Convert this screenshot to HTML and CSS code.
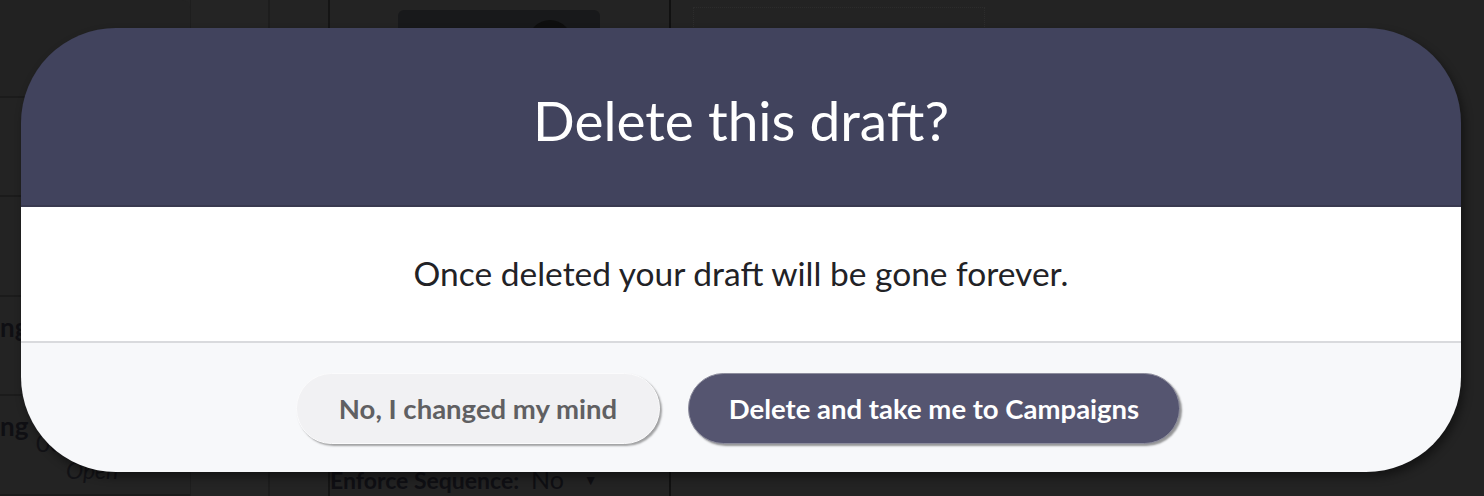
FILE: index.html
```html
<!DOCTYPE html>
<html lang="en">
<head>
    <meta charset="UTF-8">
    <meta name="viewport" content="width=device-width, initial-scale=1.0">
    <title>Delete draft</title>
    <link rel="stylesheet" href="styles.css">
</head>
<body>
    <!-- page behind the dialog -->
    <div class="page">
        <div class="side-col">
            <div class="side-card"></div>
            <div class="side-row"></div>
            <div class="side-row"></div>
            <div class="side-row"><span class="side-label">ng</span></div>
            <div class="side-row"><span class="side-label">ng</span><span class="side-date">0c</span><span class="side-status">Open</span></div>
        </div>
        <div class="gap-col"></div>
        <div class="thin-col"></div>
        <div class="main-col">
            <div class="thumb"><span class="thumb-dot"></span></div>
            <div class="enforce"><strong>Enforce Sequence:</strong> <span class="enforce-value">No</span> <span class="caret">▼</span></div>
        </div>
        <div class="right-col">
            <div class="dotted-box"></div>
        </div>
    </div>

    <!-- dialog -->
    <div class="backdrop">
        <div class="modal">
            <div class="modal-header">
                <h1>Delete this draft?</h1>
            </div>
            <div class="modal-body">
                <p>Once deleted your draft will be gone forever.</p>
            </div>
            <div class="modal-footer">
                <button class="btn btn-cancel">No, I changed my mind</button>
                <button class="btn btn-delete">Delete and take me to Campaigns</button>
            </div>
        </div>
    </div>
</body>
</html>
```

FILE: styles.css
```css
* {
    margin: 0;
    padding: 0;
    box-sizing: border-box;
}

body {
    background-color: #232323;
    font-family: 'Lato', 'Noto Sans', sans-serif;
    height: 496px;
    overflow: hidden;
}

/* background page */
.page {
    display: flex;
    height: 496px;
}

.side-col {
    width: 190px;
    display: flex;
    flex-direction: column;
}

.side-card {
    height: 100px;
    background: #222222;
    border-top-right-radius: 8px;
    border-bottom: 2px solid #1b1b1b;
}

.side-row {
    position: relative;
    height: 102px;
    border-bottom: 2px solid #1b1b1b;
}

.side-label {
    position: absolute;
    left: 0;
    top: 14px;
    font-size: 26px;
    font-weight: 700;
    color: #0f0f13;
}

.side-date {
    position: absolute;
    left: 36px;
    top: 32px;
    font-size: 24px;
    color: #121216;
}

.side-status {
    position: absolute;
    left: 66px;
    top: 60px;
    font-size: 23px;
    font-style: italic;
    color: #121216;
}

.gap-col {
    width: 80px;
    background: #242424;
    border-left: 1px solid #1e1e1e;
    border-right: 2px solid #1d1d1d;
}

.thin-col {
    width: 60px;
    background: #232323;
    border-right: 2px solid #151515;
}

.main-col {
    position: relative;
    width: 341px;
    border-right: 2px solid #111111;
}

.thumb {
    position: absolute;
    left: 68px;
    top: 10px;
    width: 202px;
    height: 60px;
    background: #18191b;
    border-radius: 6px;
    overflow: hidden;
}

.thumb-dot {
    position: absolute;
    left: 130px;
    top: 10px;
    width: 44px;
    height: 44px;
    border-radius: 50%;
    background: #0e0e0e;
}

.enforce {
    position: absolute;
    left: 0;
    top: 464px;
    font-size: 23px;
    color: #0f0f13;
    white-space: nowrap;
}

.enforce-value {
    margin-left: 6px;
    font-size: 25px;
}

.caret {
    font-size: 14px;
    margin-left: 14px;
    vertical-align: 4px;
}

.right-col {
    position: relative;
    flex: 1;
}

.dotted-box {
    position: absolute;
    left: 22px;
    top: 7px;
    width: 292px;
    height: 80px;
    border: 1px dotted #2c2c2c;
}

/* dialog */
.backdrop {
    position: fixed;
    top: 0;
    left: 0;
    width: 100%;
    height: 100%;
    display: flex;
    justify-content: center;
    padding-top: 28px;
    z-index: 1000;
}

.modal {
    width: 1440px;
    height: 444px;
    margin-left: -2px;
    border-radius: 95px;
    overflow: hidden;
    display: flex;
    flex-direction: column;
    box-shadow: 3px 5px 10px rgba(0, 0, 0, 0.45);
}

.modal-header {
    height: 179px;
    background: #41435d;
    border-bottom: 2px solid #393a50;
    display: flex;
    align-items: center;
    justify-content: center;
    padding-top: 6px;
}

.modal-header h1 {
    color: #ffffff;
    font-size: 55px;
    font-weight: 400;
}

.modal-body {
    height: 136px;
    background: #ffffff;
    border-bottom: 2px solid #d9dadd;
    display: flex;
    align-items: center;
    justify-content: center;
    padding-bottom: 2px;
}

.modal-body p {
    color: #222226;
    font-size: 33.5px;
}

.modal-footer {
    flex: 1;
    background: #f7f8fa;
    display: flex;
    justify-content: center;
    gap: 28px;
    padding-top: 30px;
    padding-right: 6px;
}

.btn {
    height: 71px;
    border-radius: 36px;
    font-family: 'Lato', 'Noto Sans', sans-serif;
    font-size: 27.5px;
    font-weight: 700;
    cursor: pointer;
}

.btn-cancel {
    width: 364px;
    background: #f1f1f3;
    color: #606062;
    border: 1px solid #fbfbfc;
    box-shadow: 2px 2px 2px rgba(0, 0, 0, 0.35);
}

.btn-delete {
    width: 492px;
    background: #555570;
    color: #ffffff;
    border: 1px solid #8d8d9d;
    box-shadow: 2px 2px 2px rgba(0, 0, 0, 0.4);
}
```
